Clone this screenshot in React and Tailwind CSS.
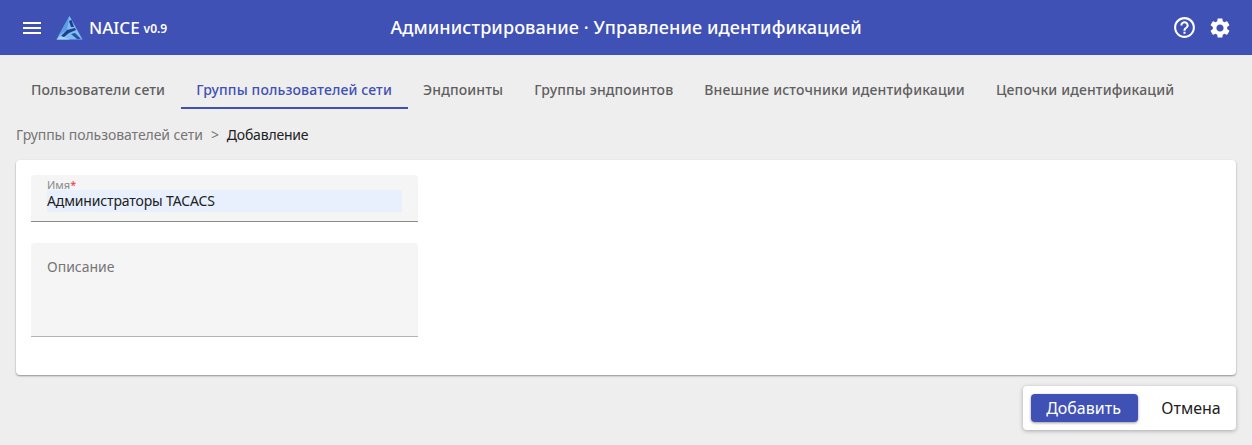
const tabs = [
  'Пользователи сети',
  'Группы пользователей сети',
  'Эндпоинты',
  'Группы эндпоинтов',
  'Внешние источники идентификации',
  'Цепочки идентификаций',
];

// координаты логотипа: вершина сверху, основание снизу
function Logo() {
  return (
    <svg width="28" height="26" viewBox="0 0 28 26" className="ml-[12px]">
      <polygon points="13.500,1 26.500,24.500 0.500,24.500" fill="#7dbcf5" />
      <polygon points="13.500,1 3,20 11,15" fill="#5a9fe6" />
      <polygon points="0.500,24.500 5,21 14,24.500" fill="#a6d4fb" />
      <polygon points="13,6 15.500,5 18,12 15,12" fill="#1f3f86" />
      <polygon points="5,21 11,15 19,13 20,15 13,18 8,22" fill="#1f3f86" />
      <polygon points="15,19 19,18 25,24 21,24" fill="#2a4f9c" />
    </svg>
  );
}

function Header() {
  return (
    <header className="flex items-center h-[55px] bg-[#3f51b5] text-white">
      <svg width="24" height="24" viewBox="0 0 24 24" fill="white" className="ml-[20px]">
        <path d="M3 18h18v-2H3v2zm0-5h18v-2H3v2zm0-7v2h18V6H3z" />
      </svg>
      <Logo />
      <span className="ml-[5px] text-[17px] font-medium">NAICE</span>
      <span className="ml-[4px] text-[12px] font-semibold mt-[2px]">v0.9</span>
      <div className="flex-1 text-center text-[18px] font-medium tracking-[0.11px] pr-[87px]">
        Администрирование · Управление идентификацией
      </div>
      <svg width="25" height="25" viewBox="0 0 24 24" fill="white">
        <path d="M11 18h2v-2h-2v2zm1-16C6.48 2 2 6.48 2 12s4.48 10 10 10 10-4.480 10-10S17.520 2 12 2zm0 18c-4.410 0-8-3.590-8-8s3.590-8 8-8 8 3.590 8 8-3.590 8-8 8zm0-14c-2.210 0-4 1.790-4 4h2c0-1.100.9-2 2-2s2 .9 2 2c0 2-3 1.750-3 5h2c0-2.250 3-2.500 3-5 0-2.210-1.790-4-4-4z" />
      </svg>
      <svg width="24" height="24" viewBox="0 0 24 24" fill="white" className="ml-[11px] mr-[20px]">
        <path d="M19.140 12.940c.04-.3.06-.61.06-.94 0-.32-.02-.64-.07-.94l2.030-1.580c.18-.14.23-.41.12-.61l-1.920-3.320c-.12-.22-.37-.29-.59-.22l-2.390.96c-.5-.38-1.030-.7-1.620-.94l-.36-2.540c-.04-.24-.24-.41-.48-.41h-3.840c-.24 0-.43.17-.47.41l-.36 2.540c-.59.24-1.130.57-1.620.94l-2.390-.96c-.22-.08-.47 0-.59.22L2.740 8.870c-.12.21-.08.47.12.61l2.030 1.580c-.05.3-.09.63-.09.94s.02.64.07.94l-2.030 1.580c-.18.14-.23.41-.12.61l1.920 3.320c.12.22.37.29.59.22l2.390-.96c.5.38 1.030.7 1.620.94l.36 2.540c.05.24.24.41.48.41h3.840c.24 0 .44-.17.47-.41l.36-2.540c.59-.24 1.130-.56 1.620-.94l2.390.96c.22.08.47 0 .59-.22l1.920-3.320c.12-.22.07-.47-.12-.61l-2.010-1.580zM12 15.600c-1.980 0-3.600-1.620-3.600-3.600s1.620-3.600 3.600-3.600 3.600 1.620 3.600 3.600-1.620 3.600-3.600 3.600z" />
      </svg>
    </header>
  );
}

function Tabs() {
  return (
    <nav className="flex px-[15.5px] h-[54px] pt-[16px]">
      {tabs.map((t, i) => (
        <div
          key={t}
          className={
            'flex items-center px-[15.5px] text-[14px] tracking-[0.14px] font-medium border-b-2 ' +
            (i === 1 ? 'text-[#3f51b5] border-[#3f51b5]' : 'text-[#5f5f5f] border-transparent')
          }
        >
          {t}
        </div>
      ))}
    </nav>
  );
}

function Form() {
  return (
    <section className="mx-[16px] h-[215px] bg-white rounded-[4px] shadow-[0_1px_2px_rgba(0,0,0,0.4)] px-[15px] pt-[15px]">
      <div className="w-[387px] h-[47px] bg-[#f5f5f5] rounded-t-[4px] border-b border-[#8c8c8c] px-[16px] pt-[4px]">
        <div className="text-[11px] leading-[11px] text-[#8a8a8a]">
          Имя<span className="text-[#e53935]">*</span>
        </div>
        <div className="h-[22px] bg-[#e8f0fe] text-[14px] tracking-[-0.14px] leading-[22px] text-[#212121]">
          Администраторы TACACS
        </div>
      </div>
      <div className="mt-[21px] w-[387px] h-[94px] bg-[#f5f5f5] rounded-t-[4px] border-b border-[#b5b5b5] px-[16px] pt-[14px]">
        <div className="text-[14px] leading-[19px] text-[#757575]">Описание</div>
      </div>
    </section>
  );
}

export default function App() {
  return (
    <div className="h-[445px] bg-[#eeeeee] overflow-hidden font-['Noto_Sans',sans-serif]">
      <Header />
      <Tabs />
      <div className="flex items-center h-[51px] px-[16px] text-[14px] tracking-[-0.06px] text-[#757575]">
        <span>Группы пользователей сети</span>
        <span className="mx-[8px]">&gt;</span>
        <span className="text-[#212121] tracking-[-0.2px]">Добавление</span>
      </div>
      <Form />
      <div className="flex justify-end mx-[16px] mt-[11px]">
        <div className="flex items-center h-[44px] w-[213px] bg-white rounded-[4px] shadow-[0_1px_4px_rgba(0,0,0,0.3)] pl-[8px]">
          <button className="w-[107px] h-[28px] pr-[2px] bg-[#3f51b5] text-white text-[16px] leading-[28px] rounded-[4px] shadow-[0_1px_3px_rgba(0,0,0,0.4)]">
            Добавить
          </button>
          <button className="w-[98px] pl-[8px] text-center text-[16px] text-[#212121]">Отмена</button>
        </div>
      </div>
    </div>
  );
}
